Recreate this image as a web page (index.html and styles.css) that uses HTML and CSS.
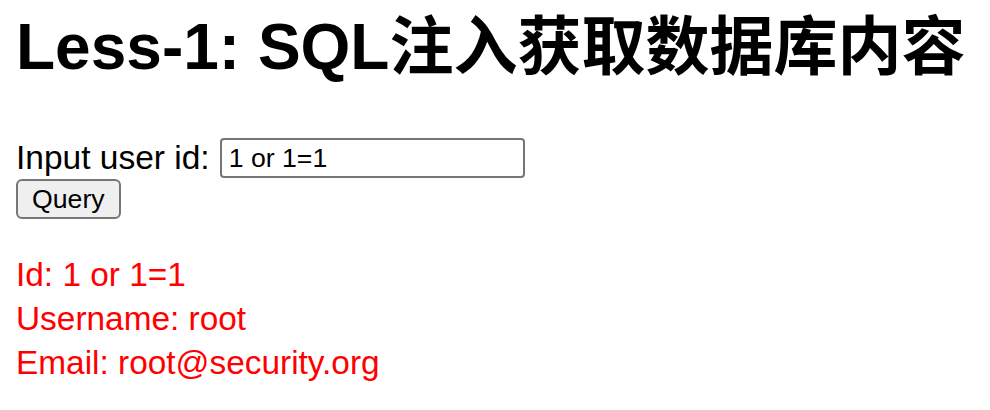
FILE: index.html
```html
<!DOCTYPE html>
<html lang="zh">
<head>
<meta charset="utf-8">
<title>Less-1</title>
<link rel="stylesheet" href="styles.css">
</head>
<body>
<h1 class="title">Less-1: SQL注入获取数据库内容</h1>
<form class="query-form">
  <div class="row">
    <label class="label" for="uid">Input user id:</label>
    <input class="field" id="uid" type="text" value="1 or 1=1">
  </div>
  <div class="row-btn">
    <button class="btn" type="button">Query</button>
  </div>
</form>
<div class="result">
  <div class="line">Id: 1 or 1=1</div>
  <div class="line">Username: root</div>
  <div class="line">Email: root@security.org</div>
</div>
</body>
</html>
```
FILE: styles.css
```css
html, body {
  background: #ffffff;
}
body {
  margin: 0 0 0 16px;
  font-family: "Liberation Sans", Arial, "Noto Sans CJK SC", sans-serif;
  color: #000000;
}
.title {
  margin: 10px 0 0;
  font-size: 64px;
  font-weight: bold;
  line-height: 74px;
  font-family: "Liberation Sans", Arial, "Noto Sans CJK SC", sans-serif;
  white-space: nowrap;
}
.query-form {
  margin-top: 53px;
}
.row {
  display: flex;
  align-items: center;
  height: 42px;
  gap: 10px;
}
.label {
  font-size: 33.5px;
  line-height: 38px;
}
.field {
  box-sizing: border-box;
  width: 305px;
  height: 40px;
  margin: 0;
  padding: 2px 7px;
  border: 2px solid #767676;
  border-radius: 4px;
  font-family: "Liberation Sans", Arial, sans-serif;
  font-size: 26.67px;
  color: #000;
  background: #fff;
  outline: none;
}
.row-btn {
  display: flex;
}
.btn {
  box-sizing: border-box;
  height: 40px;
  margin: 0;
  padding: 2px 14px;
  border: 2px solid #767676;
  border-radius: 6px;
  background: #efefef;
  font-family: "Liberation Sans", Arial, sans-serif;
  font-size: 26.67px;
  color: #000;
}
.result {
  margin-top: 34px;
  color: #ff0000;
  font-size: 33.4px;
  line-height: 44px;
}
```
